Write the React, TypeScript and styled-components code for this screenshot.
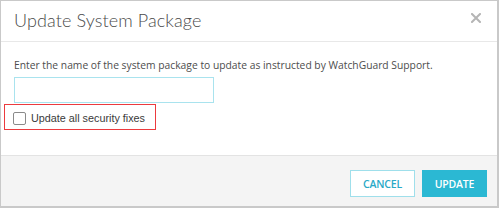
import React from 'react';
import styled, {createGlobalStyle} from 'styled-components';

const GlobalStyle = createGlobalStyle`
  html, body { margin: 0; padding: 0; background: #ffffff; }
  * { box-sizing: border-box; }
`;

const App = () => {
    return <>
        <GlobalStyle/>
        <Dialog>
            <Header>
                <Title>Update System Package</Title>
                <Close aria-label="close">
                    <svg width="10" height="10" viewBox="0 0 10 10">
                        <path d="M1 1 L9 9 M9 1 L1 9" stroke="#b5b5b5" strokeWidth="2" strokeLinecap="square"/>
                    </svg>
                </Close>
            </Header>
            <Body>
                <Instructions>Enter the name of the system package to update as instructed by WatchGuard Support.</Instructions>
                <PackageInput type="text"/>
                <CheckRow>
                    <Box/>
                    <CheckLabel>Update all security fixes</CheckLabel>
                </CheckRow>
            </Body>
            <Footer>
                <Button>CANCEL</Button>
                <Button primary>UPDATE</Button>
            </Footer>
        </Dialog>
    </>
};

const Dialog = styled.div`
  width: 499px;
  height: 208px;
  border: 1px solid #c9c9c9;
  border-right-width: 2px;
  border-bottom-width: 2px;
  display: flex;
  flex-direction: column;
  background: #fff;
`;

const Header = styled.div`
  height: 41px;
  flex-shrink: 0;
  border-bottom: 1px solid #e8e8e8;
  display: flex;
  align-items: center;
  justify-content: space-between;
  padding: 0 13px 2px 13px;
`;

const Title = styled.h1`
  margin: 0;
  font-family: "Lato", "Open Sans", sans-serif;
  font-weight: 300;
  font-size: 18px;
  letter-spacing: 0.1px;
  color: #4a4a4a;
`;

const Close = styled.div`
  display: flex;
  align-items: center;
  margin-right: 3px;
  margin-bottom: 4px;
`;

const Body = styled.div`
  flex: 1;
  padding: 16px 13px 0 13px;
  display: flex;
  flex-direction: column;
  align-items: flex-start;
`;

const Instructions = styled.p`
  margin: 0;
  font-family: "Open Sans", sans-serif;
  font-size: 10.3px;
  line-height: 14px;
  white-space: nowrap;
  color: #4d4d4d;
`;

const PackageInput = styled.input`
  margin-top: 5px;
  width: 200px;
  height: 26px;
  border: 1px solid #a9e3ee;
  outline: none;
  padding: 0 6px;
`;

const CheckRow = styled.label`
  margin-top: 1px;
  margin-left: -10px;
  width: 152px;
  height: 26px;
  border: 1.5px solid #ec3a3e;
  display: flex;
  align-items: center;
  padding-left: 8px;
  gap: 5px;
`;

const Box = styled.span`
  flex-shrink: 0;
  width: 13px;
  height: 13px;
  border: 1px solid #8a8a8a;
  border-radius: 2px;
  background: #fff;
  margin-top: 2px;
`;

const CheckLabel = styled.span`
  font-family: "Liberation Sans", Arial, sans-serif;
  font-size: 10.8px;
  white-space: nowrap;
  color: #3a3a3a;
  margin-top: 1px;
`;

const Footer = styled.div`
  height: 51px;
  flex-shrink: 0;
  border-top: 1px solid #e3e3e3;
  background: #f4f4f4;
  display: flex;
  justify-content: flex-end;
  align-items: flex-start;
  gap: 7px;
  padding: 14px 10px 0 0;
`;

const Button = styled.button`
  width: 65px;
  height: 27px;
  border: 1px solid ${p => p.primary ? '#2bb8d3' : '#9fdfeb'};
  background: ${p => p.primary ? '#2bb8d3' : '#fff'};
  color: ${p => p.primary ? '#fff' : '#2aa9c7'};
  font-family: "Open Sans", sans-serif;
  font-weight: 600;
  font-size: 10.5px;
  letter-spacing: -0.2px;
  padding: 0;
  cursor: pointer;
`;

export default App
